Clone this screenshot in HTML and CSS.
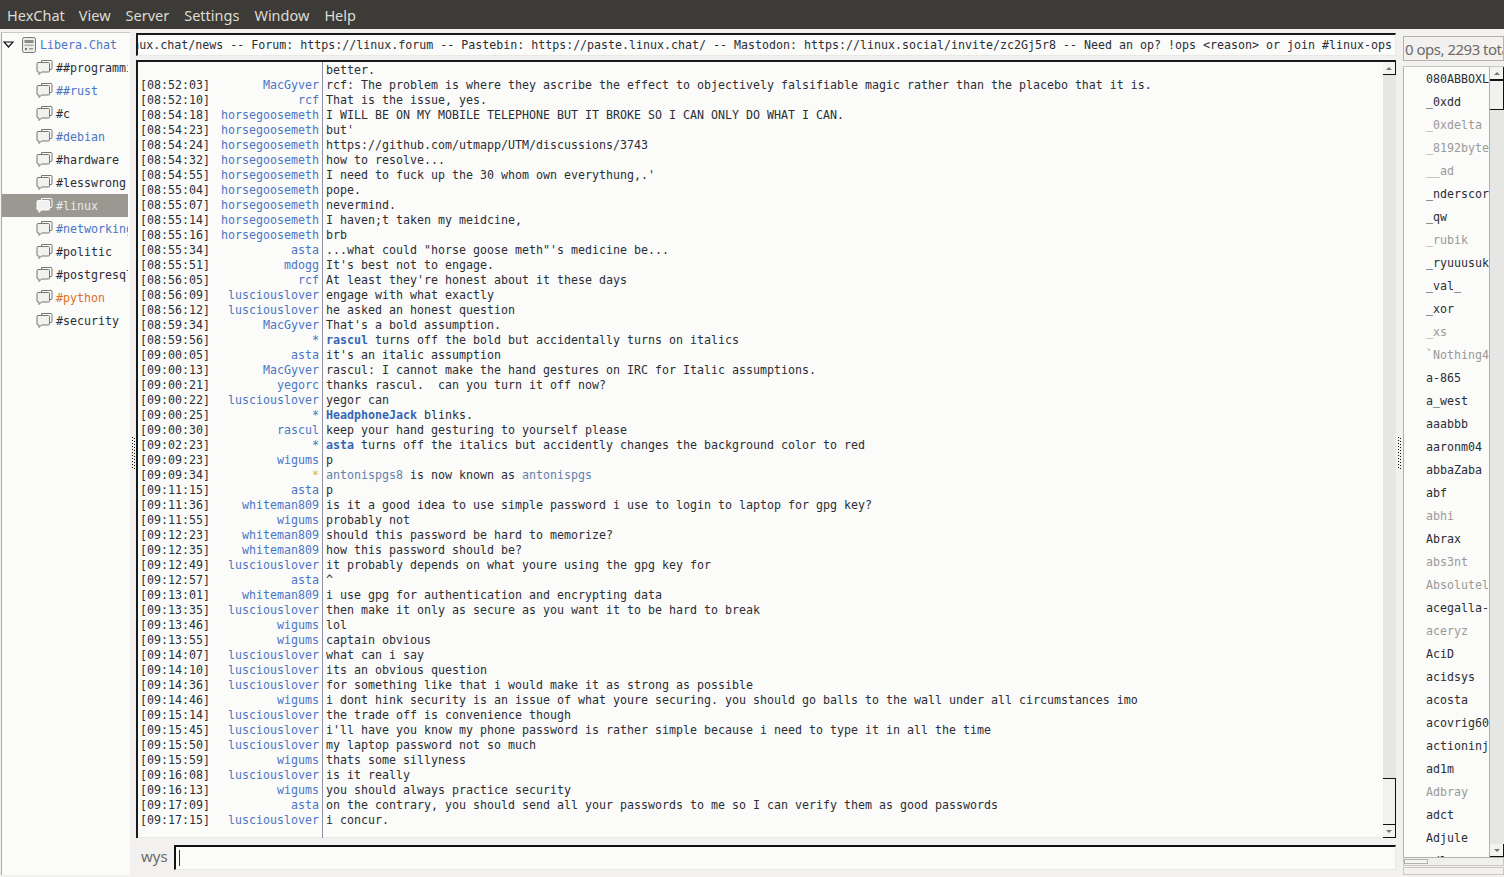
FILE: index.html
```html
<!DOCTYPE html>
<html lang="en">
<head>
<meta charset="utf-8">
<title>HexChat</title>
<link rel="stylesheet" href="styles.css">
</head>
<body>
<svg class="defs" width="0" height="0" aria-hidden="true">
  <symbol id="bubbles" viewBox="0 0 17 18">
    <path d="M5.500 1.500h9.500a1 1 0 0 1 1 1v7a1 1 0 0 1-1 1h-1" fill="none" stroke="currentColor" stroke-width="1"/>
    <path d="M5.500 1.500v2" fill="none" stroke="currentColor" stroke-width="1"/>
    <path d="M2 3.500h10.500a1 1 0 0 1 1 1v7.500a1 1 0 0 1-1 1H5.500L3 15.500V13H2a1 1 0 0 1-1-1V4.500a1 1 0 0 1 1-1z" fill="#f1f1ef" stroke="currentColor" stroke-width="1"/>
  </symbol>
</svg>
<nav class="menubar">
  <span class="menu-item">HexChat</span>
  <span class="menu-item">View</span>
  <span class="menu-item">Server</span>
  <span class="menu-item">Settings</span>
  <span class="menu-item">Window</span>
  <span class="menu-item">Help</span>
</nav>
<main class="panes">
  <aside class="tree">
    <div class="tree-row server">
      <svg class="expander" width="11" height="7" viewBox="0 0 11 7"><path d="M1 1h9L5.500 6z" fill="#fbfbfa" stroke="#111" stroke-width="1.200"/></svg>
      <svg class="server-icon" width="16" height="18" viewBox="0 0 16 18"><rect x="1.500" y="1.500" width="13" height="15" rx="2" fill="#ececea" stroke="#77776f"/><rect x="3.500" y="4" width="9" height="3" fill="#8d8d88"/><rect x="3.500" y="8.500" width="9" height="1.500" fill="#b0b0aa"/><rect x="4" y="12" width="2" height="2" fill="#77776f"/><rect x="8" y="12" width="4" height="1.500" fill="#9a9a94"/></svg>
      <span class="blue">Libera.Chat</span>
    </div>
    <div class="tree-row channel"><svg class="bubble"><use href="#bubbles"/></svg><span>##programming</span></div>
    <div class="tree-row channel"><svg class="bubble"><use href="#bubbles"/></svg><span class="blue">##rust</span></div>
    <div class="tree-row channel"><svg class="bubble"><use href="#bubbles"/></svg><span>#c</span></div>
    <div class="tree-row channel"><svg class="bubble"><use href="#bubbles"/></svg><span class="blue">#debian</span></div>
    <div class="tree-row channel"><svg class="bubble"><use href="#bubbles"/></svg><span>#hardware</span></div>
    <div class="tree-row channel"><svg class="bubble"><use href="#bubbles"/></svg><span>#lesswrong</span></div>
    <div class="tree-row channel selected"><svg class="bubble"><use href="#bubbles"/></svg><span>#linux</span></div>
    <div class="tree-row channel"><svg class="bubble"><use href="#bubbles"/></svg><span class="blue">#networking</span></div>
    <div class="tree-row channel"><svg class="bubble"><use href="#bubbles"/></svg><span>#politic</span></div>
    <div class="tree-row channel"><svg class="bubble"><use href="#bubbles"/></svg><span>#postgresql</span></div>
    <div class="tree-row channel"><svg class="bubble"><use href="#bubbles"/></svg><span class="orange">#python</span></div>
    <div class="tree-row channel"><svg class="bubble"><use href="#bubbles"/></svg><span>#security</span></div>
  </aside>
  <div class="handle-col"><div class="handle"></div></div>
  <section class="center">
    <div class="topic"><span class="topic-text">Welcome to #linux -- https://linux.chat/news -- Forum: https://linux.forum -- Pastebin: https://paste.linux.chat/ -- Mastodon: https://linux.social/invite/zc2Gj5r8 -- Need an op? !ops &lt;reason&gt; or join #linux-ops</span></div>
    <div class="chat">
      <div class="log">
        <div class="line"><span class="ts"></span><span class="nick"></span><span class="msg">better.</span></div>
        <div class="line"><span class="ts">[08:52:03]</span><span class="nick">MacGyver</span><span class="msg">rcf: The problem is where they ascribe the effect to objectively falsifiable magic rather than the placebo that it is.</span></div>
        <div class="line"><span class="ts">[08:52:10]</span><span class="nick">rcf</span><span class="msg">That is the issue, yes.</span></div>
        <div class="line"><span class="ts">[08:54:18]</span><span class="nick">horsegoosemeth</span><span class="msg">I WILL BE ON MY MOBILE TELEPHONE BUT IT BROKE SO I CAN ONLY DO WHAT I CAN.</span></div>
        <div class="line"><span class="ts">[08:54:23]</span><span class="nick">horsegoosemeth</span><span class="msg">but'</span></div>
        <div class="line"><span class="ts">[08:54:24]</span><span class="nick">horsegoosemeth</span><span class="msg">https://github.com/utmapp/UTM/discussions/3743</span></div>
        <div class="line"><span class="ts">[08:54:32]</span><span class="nick">horsegoosemeth</span><span class="msg">how to resolve...</span></div>
        <div class="line"><span class="ts">[08:54:55]</span><span class="nick">horsegoosemeth</span><span class="msg">I need to fuck up the 30 whom own everythung,.'</span></div>
        <div class="line"><span class="ts">[08:55:04]</span><span class="nick">horsegoosemeth</span><span class="msg">pope.</span></div>
        <div class="line"><span class="ts">[08:55:07]</span><span class="nick">horsegoosemeth</span><span class="msg">nevermind.</span></div>
        <div class="line"><span class="ts">[08:55:14]</span><span class="nick">horsegoosemeth</span><span class="msg">I haven;t taken my meidcine,</span></div>
        <div class="line"><span class="ts">[08:55:16]</span><span class="nick">horsegoosemeth</span><span class="msg">brb</span></div>
        <div class="line"><span class="ts">[08:55:34]</span><span class="nick">asta</span><span class="msg">...what could "horse goose meth"'s medicine be...</span></div>
        <div class="line"><span class="ts">[08:55:51]</span><span class="nick">mdogg</span><span class="msg">It's best not to engage.</span></div>
        <div class="line"><span class="ts">[08:56:05]</span><span class="nick">rcf</span><span class="msg">At least they're honest about it these days</span></div>
        <div class="line"><span class="ts">[08:56:09]</span><span class="nick">lusciouslover</span><span class="msg">engage with what exactly</span></div>
        <div class="line"><span class="ts">[08:56:12]</span><span class="nick">lusciouslover</span><span class="msg">he asked an honest question</span></div>
        <div class="line"><span class="ts">[08:59:34]</span><span class="nick">MacGyver</span><span class="msg">That's a bold assumption.</span></div>
        <div class="line"><span class="ts">[08:59:56]</span><span class="nick">*</span><span class="msg"><b class="actor">rascul</b> turns off the bold but accidentally turns on italics</span></div>
        <div class="line"><span class="ts">[09:00:05]</span><span class="nick">asta</span><span class="msg">it's an italic assumption</span></div>
        <div class="line"><span class="ts">[09:00:13]</span><span class="nick">MacGyver</span><span class="msg">rascul: I cannot make the hand gestures on IRC for Italic assumptions.</span></div>
        <div class="line"><span class="ts">[09:00:21]</span><span class="nick">yegorc</span><span class="msg">thanks rascul.  can you turn it off now?</span></div>
        <div class="line"><span class="ts">[09:00:22]</span><span class="nick">lusciouslover</span><span class="msg">yegor can</span></div>
        <div class="line"><span class="ts">[09:00:25]</span><span class="nick">*</span><span class="msg"><b class="actor">HeadphoneJack</b> blinks.</span></div>
        <div class="line"><span class="ts">[09:00:30]</span><span class="nick">rascul</span><span class="msg">keep your hand gesturing to yourself please</span></div>
        <div class="line"><span class="ts">[09:02:23]</span><span class="nick">*</span><span class="msg"><b class="actor">asta</b> turns off the italics but accidently changes the background color to red</span></div>
        <div class="line"><span class="ts">[09:09:23]</span><span class="nick">wigums</span><span class="msg">p</span></div>
        <div class="line"><span class="ts">[09:09:34]</span><span class="nick notice">*</span><span class="msg"><span class="renamed">antonispgs8</span> is now known as <span class="renamed">antonispgs</span></span></div>
        <div class="line"><span class="ts">[09:11:15]</span><span class="nick">asta</span><span class="msg">p</span></div>
        <div class="line"><span class="ts">[09:11:36]</span><span class="nick">whiteman809</span><span class="msg">is it a good idea to use simple password i use to login to laptop for gpg key?</span></div>
        <div class="line"><span class="ts">[09:11:55]</span><span class="nick">wigums</span><span class="msg">probably not</span></div>
        <div class="line"><span class="ts">[09:12:23]</span><span class="nick">whiteman809</span><span class="msg">should this password be hard to memorize?</span></div>
        <div class="line"><span class="ts">[09:12:35]</span><span class="nick">whiteman809</span><span class="msg">how this password should be?</span></div>
        <div class="line"><span class="ts">[09:12:49]</span><span class="nick">lusciouslover</span><span class="msg">it probably depends on what youre using the gpg key for</span></div>
        <div class="line"><span class="ts">[09:12:57]</span><span class="nick">asta</span><span class="msg">^</span></div>
        <div class="line"><span class="ts">[09:13:01]</span><span class="nick">whiteman809</span><span class="msg">i use gpg for authentication and encrypting data</span></div>
        <div class="line"><span class="ts">[09:13:35]</span><span class="nick">lusciouslover</span><span class="msg">then make it only as secure as you want it to be hard to break</span></div>
        <div class="line"><span class="ts">[09:13:46]</span><span class="nick">wigums</span><span class="msg">lol</span></div>
        <div class="line"><span class="ts">[09:13:55]</span><span class="nick">wigums</span><span class="msg">captain obvious</span></div>
        <div class="line"><span class="ts">[09:14:07]</span><span class="nick">lusciouslover</span><span class="msg">what can i say</span></div>
        <div class="line"><span class="ts">[09:14:10]</span><span class="nick">lusciouslover</span><span class="msg">its an obvious question</span></div>
        <div class="line"><span class="ts">[09:14:36]</span><span class="nick">lusciouslover</span><span class="msg">for something like that i would make it as strong as possible</span></div>
        <div class="line"><span class="ts">[09:14:46]</span><span class="nick">wigums</span><span class="msg">i dont hink security is an issue of what youre securing. you should go balls to the wall under all circumstances imo</span></div>
        <div class="line"><span class="ts">[09:15:14]</span><span class="nick">lusciouslover</span><span class="msg">the trade off is convenience though</span></div>
        <div class="line"><span class="ts">[09:15:45]</span><span class="nick">lusciouslover</span><span class="msg">i'll have you know my phone password is rather simple because i need to type it in all the time</span></div>
        <div class="line"><span class="ts">[09:15:50]</span><span class="nick">lusciouslover</span><span class="msg">my laptop password not so much</span></div>
        <div class="line"><span class="ts">[09:15:59]</span><span class="nick">wigums</span><span class="msg">thats some sillyness</span></div>
        <div class="line"><span class="ts">[09:16:08]</span><span class="nick">lusciouslover</span><span class="msg">is it really</span></div>
        <div class="line"><span class="ts">[09:16:13]</span><span class="nick">wigums</span><span class="msg">you should always practice security</span></div>
        <div class="line"><span class="ts">[09:17:09]</span><span class="nick">asta</span><span class="msg">on the contrary, you should send all your passwords to me so I can verify them as good passwords</span></div>
        <div class="line"><span class="ts">[09:17:15]</span><span class="nick">lusciouslover</span><span class="msg">i concur.</span></div>
      </div>
      <div class="vscroll chat-scroll">
        <div class="sb-btn up"></div>
        <div class="trough"><div class="thumb"></div></div>
        <div class="sb-btn down"></div>
      </div>
    </div>
    <div class="input-row">
      <span class="my-nick">wys</span>
      <div class="input"><span class="caret"></span></div>
    </div>
  </section>
  <div class="handle-col"><div class="handle"></div></div>
  <aside class="users">
    <div class="user-count"><span>0 ops, 2293 total</span></div>
    <div class="user-box">
      <div class="user-list">
        <div class="user">080ABBOXLD</div>
        <div class="user">_0xdd</div>
        <div class="user away">_0xdelta</div>
        <div class="user away">_8192byte</div>
        <div class="user away">__ad</div>
        <div class="user">_nderscore</div>
        <div class="user">_qw</div>
        <div class="user away">_rubik</div>
        <div class="user">_ryuuusuke</div>
        <div class="user">_val_</div>
        <div class="user">_xor</div>
        <div class="user away">_xs</div>
        <div class="user away">`Nothing4</div>
        <div class="user">a-865</div>
        <div class="user">a_west</div>
        <div class="user">aaabbb</div>
        <div class="user">aaronm04</div>
        <div class="user">abbaZaba</div>
        <div class="user">abf</div>
        <div class="user away">abhi</div>
        <div class="user">Abrax</div>
        <div class="user away">abs3nt</div>
        <div class="user away">Absolutely</div>
        <div class="user">acegalla-</div>
        <div class="user away">aceryz</div>
        <div class="user">AciD</div>
        <div class="user">acidsys</div>
        <div class="user">acosta</div>
        <div class="user">acovrig60</div>
        <div class="user">actioninja</div>
        <div class="user">ad1m</div>
        <div class="user away">Adbray</div>
        <div class="user">adct</div>
        <div class="user">Adjule</div>
        <div class="user">adlan</div>
      </div>
      <div class="vscroll user-scroll">
        <div class="sb-btn up"></div>
        <div class="trough"><div class="thumb"></div></div>
        <div class="sb-btn down"></div>
      </div>
    </div>
    <div class="hscroll"><div class="hthumb"></div></div>
    <div class="user-actions"></div>
  </aside>
</main>
</body>
</html>
```

FILE: styles.css
```css
* { box-sizing: border-box; }
html, body { margin: 0; height: 100%; }
body {
  width: 1504px;
  height: 877px;
  overflow: hidden;
  background: #f2f1f0;
  font-family: "DejaVu Sans Mono", monospace;
  font-size: 11.63px;
  color: #2a2e35;
  display: flex;
  flex-direction: column;
}
.defs { position: absolute; }

.menubar {
  height: 29px;
  flex: none;
  background: #3c3b37;
  color: #dfdbd2;
  font-family: "Noto Sans", sans-serif;
  font-size: 14.5px;
  display: flex;
  align-items: center;
  gap: 15px;
  padding: 0 0 0 7px;
}
.menu-item:first-child { margin-right: -1px; }

.panes { flex: none; height: 846px; display: flex; }

/* channel tree */
.tree {
  width: 129px;
  flex: none;
  margin: 3px 0 0 1px;
  background: #fbfbfa;
  border-left: 1px solid #aaa9a4;
  border-top: 1px solid #c9c8c3;
  overflow: hidden;
}
.tree-row {
  height: 23px;
  display: flex;
  align-items: center;
  white-space: nowrap;
  width: 126px;
  overflow: hidden;
}
.server { gap: 0; padding-left: 1px; }
.expander { flex: none; margin-right: 7px; }
.server-icon { flex: none; margin-right: 3px; }
.channel { padding-left: 34px; color: #2a2e35; }
.bubble { width: 17px; height: 18px; flex: none; margin-right: 3px; color: #77776f; }
.selected { background: #9a9890; color: #e9e9e6; }
.selected .bubble { color: #fbfbfa; }
.blue { color: #4a76c4; }
.orange { color: #e0701a; }

/* pane handles */
.handle-col { flex: none; display: flex; align-items: center; justify-content: center; padding-top: 2px; }
.handle {
  width: 3px;
  height: 32px;
  background:
    repeating-linear-gradient(to bottom, #111 0 1px, transparent 1px 3px) 0 0 / 1px 100% no-repeat,
    repeating-linear-gradient(to bottom, transparent 0 1px, #111 1px 2px, transparent 2px 3px) 2px 0 / 1px 100% no-repeat;
}
.tree + .handle-col { width: 6px; }
.center + .handle-col { width: 7px; }

/* centre column */
.center { width: 1260px; flex: none; display: flex; flex-direction: column; padding-top: 4px; }
.topic {
  height: 23px;
  flex: none;
  background: #fbfbfa;
  border-top: 2px solid #1a1a1a;
  border-left: 2px solid #1a1a1a;
  border-right: 1px solid #e8e8e5;
  border-bottom: 1px solid #e8e8e5;
  display: flex;
  justify-content: flex-end;
  align-items: center;
  overflow: hidden;
  white-space: nowrap;
  padding-right: 3px;
}
.topic-text { flex: none; }

.chat {
  height: 778px;
  flex: none;
  margin-top: 4px;
  background: #fbfbfa;
  border-top: 2px solid #1a1a1a;
  border-left: 2px solid #1a1a1a;
  display: flex;
  position: relative;
}
.chat::before {
  content: "";
  position: absolute;
  left: 184px;
  top: 0;
  bottom: 0;
  width: 1px;
  background: #8f8fa8;
}
.log { flex: 1; padding-top: 1px; overflow: hidden; border-bottom: 1px solid #e8e8e5; }
.line { height: 15px; line-height: 15px; display: flex; white-space: pre; }
.ts { width: 69px; margin-left: 2px; flex: none; }
.nick { width: 110px; text-align: right; flex: none; color: #4a76c4; }
.notice { color: #e3b341; }
.msg { margin-left: 7px; flex: none; }
.actor { color: #3566b5; font-weight: bold; }
.renamed { color: #5f82ad; }

/* scrollbars */
.vscroll { width: 13px; flex: none; display: flex; flex-direction: column; background: #e6e6e4; }
.trough { flex: 1; display: flex; flex-direction: column; }
.sb-btn {
  height: 13px;
  flex: none;
  background: #f3f3f1;
  border-right: 1px solid #111;
  border-bottom: 1px solid #111;
  display: flex;
  align-items: center;
  justify-content: center;
}
.sb-btn::after { content: ""; border-left: 3px solid transparent; border-right: 3px solid transparent; }
.up::after { border-bottom: 3px solid #77776f; }
.down::after { border-top: 3px solid #77776f; }
.thumb {
  background: #f1f1ef;
  border-top: 1px solid #111;
  border-right: 1px solid #111;
  border-bottom: 1px solid #111;
}
.chat-scroll .trough { justify-content: flex-end; }
.chat-scroll .thumb { height: 47px; }
.user-scroll .thumb { height: 30px; }

/* input */
.input-row { flex: none; display: flex; align-items: flex-start; height: 25px; margin-top: 7px; }
.my-nick {
  width: 39px;
  flex: none;
  margin-left: -1px;
  padding-left: 6px;
  font-family: "Noto Sans", sans-serif;
  font-size: 15px;
  line-height: 23px;
  color: #6c6c68;
}
.input {
  flex: 1;
  height: 25px;
  background: #fbfbfa;
  border-top: 2px solid #111;
  border-left: 2px solid #111;
  border-bottom: 1px solid #e8e8e5;
  border-right: 1px solid #e8e8e5;
  display: flex;
  align-items: center;
  padding-left: 3px;
}
.caret { width: 1px; height: 16px; background: #333; }

/* users */
.users { flex: 1; display: flex; flex-direction: column; min-width: 0; padding-top: 7px; }
.user-count {
  height: 25px;
  flex: none;
  border: 1px solid #b3b3ae;
  font-family: "Noto Sans", sans-serif;
  font-size: 15px;
  letter-spacing: -0.5px;
  line-height: 24px;
  color: #6c6c68;
  white-space: nowrap;
  overflow: hidden;
  padding-left: 1px;
}
.user-box {
  height: 791px;
  flex: none;
  margin-top: 5px;
  display: flex;
  background: #fbfbfa;
  border-top: 1px solid #c9c8c3;
  border-left: 1px solid #b3b3ae;
}
.user-list { flex: 1; min-width: 0; overflow: hidden; padding-top: 1px; border-right: 1px solid #b3b3ae; }
.user { height: 23px; line-height: 23px; padding-left: 22px; white-space: nowrap; }
.away { color: #9a9a98; }
.user-scroll { width: 14px; }
.hscroll { height: 9px; flex: none; border: 1px solid #c9c8c3; border-top: 1px solid #b3b3ae; background: #efefed; padding: 1px 0; }
.hthumb { width: 24px; height: 100%; background: #f3f3f1; border: 1px solid #b3b3ae; }
.user-actions { height: 8px; flex: none; border: 1px solid #c9c8c3; margin-top: 1px; }
```
